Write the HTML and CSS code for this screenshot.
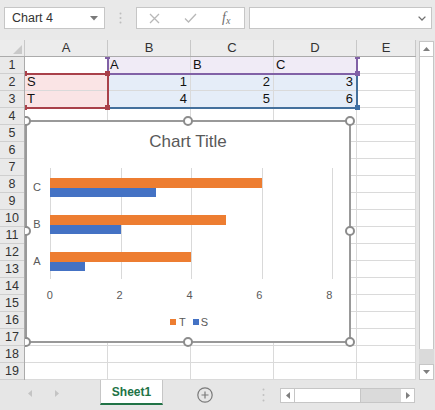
FILE: index.html
```html
<!DOCTYPE html>
<html>
<head>
<meta charset="utf-8">
<title>Chart 4</title>
<link rel="stylesheet" href="styles.css">
</head>
<body>
<div class="app">
  <div class="toolbar">
    <div class="namebox">
      <span>Chart 4</span>
      <svg width="8" height="5" viewBox="0 0 8 5"><path d="M0 0H8L4 4.5Z" fill="#7a7a7a"/></svg>
    </div>
    <div class="grip">
      <svg width="3" height="12" viewBox="0 0 3 12"><circle cx="1.5" cy="1.5" r="1" fill="#bdbdbd"/><circle cx="1.5" cy="6" r="1" fill="#bdbdbd"/><circle cx="1.5" cy="10.5" r="1" fill="#bdbdbd"/></svg>
    </div>
    <div class="fxbox">
      <div class="slot"><svg width="11" height="11" viewBox="0 0 11 11"><path d="M1 1L10 10M10 1L1 10" stroke="#b8b8b8" stroke-width="1.3"/></svg></div>
      <div class="slot"><svg width="13" height="10" viewBox="0 0 13 10"><path d="M1 5.5L4.5 9L12 1" stroke="#b8b8b8" stroke-width="1.3" fill="none"/></svg></div>
      <div class="slot"><span class="fx">f<span class="fxs">x</span></span></div>
    </div>
    <div class="formula">
      <svg width="8" height="5" viewBox="0 0 8 5"><path d="M0.6 0.6L4 4L7.4 0.6" stroke="#707070" stroke-width="1.3" fill="none"/></svg>
    </div>
  </div>

  <div class="main">
    <div class="sheet">
      <div class="colheads">
        <div class="corner"><svg width="9" height="9" viewBox="0 0 9 9"><path d="M9 0V9H0Z" fill="#c9c9c9"/></svg></div>
        <div class="ch">A</div>
        <div class="ch">B</div>
        <div class="ch">C</div>
        <div class="ch">D</div>
        <div class="ch last">E</div>
      </div>
      <div class="body">
        <div class="rowheads">
          <div class="rh">1</div><div class="rh">2</div><div class="rh">3</div><div class="rh">4</div>
          <div class="rh">5</div><div class="rh">6</div><div class="rh">7</div><div class="rh">8</div>
          <div class="rh">9</div><div class="rh">10</div><div class="rh">11</div><div class="rh">12</div>
          <div class="rh">13</div><div class="rh">14</div><div class="rh">15</div><div class="rh">16</div>
          <div class="rh">17</div><div class="rh">18</div><div class="rh">19</div>
        </div>
        <div class="cells">
          <div class="c"></div><div class="c lav">A</div><div class="c lav">B</div><div class="c lav">C</div><div class="c"></div>
          <div class="c pink">S</div><div class="c blu n">1</div><div class="c blu n">2</div><div class="c blu n">3</div><div class="c"></div>
          <div class="c pink">T</div><div class="c blu n">4</div><div class="c blu n">5</div><div class="c blu n">6</div><div class="c"></div>
          <div class="c"></div><div class="c"></div><div class="c"></div><div class="c"></div><div class="c"></div>
          <div class="c"></div><div class="c"></div><div class="c"></div><div class="c"></div><div class="c"></div>
          <div class="c"></div><div class="c"></div><div class="c"></div><div class="c"></div><div class="c"></div>
          <div class="c"></div><div class="c"></div><div class="c"></div><div class="c"></div><div class="c"></div>
          <div class="c"></div><div class="c"></div><div class="c"></div><div class="c"></div><div class="c"></div>
          <div class="c"></div><div class="c"></div><div class="c"></div><div class="c"></div><div class="c"></div>
          <div class="c"></div><div class="c"></div><div class="c"></div><div class="c"></div><div class="c"></div>
          <div class="c"></div><div class="c"></div><div class="c"></div><div class="c"></div><div class="c"></div>
          <div class="c"></div><div class="c"></div><div class="c"></div><div class="c"></div><div class="c"></div>
          <div class="c"></div><div class="c"></div><div class="c"></div><div class="c"></div><div class="c"></div>
          <div class="c"></div><div class="c"></div><div class="c"></div><div class="c"></div><div class="c"></div>
          <div class="c"></div><div class="c"></div><div class="c"></div><div class="c"></div><div class="c"></div>
          <div class="c"></div><div class="c"></div><div class="c"></div><div class="c"></div><div class="c"></div>
          <div class="c"></div><div class="c"></div><div class="c"></div><div class="c"></div><div class="c"></div>
          <div class="c"></div><div class="c"></div><div class="c"></div><div class="c"></div><div class="c"></div>
          <div class="c"></div><div class="c"></div><div class="c"></div><div class="c"></div><div class="c"></div>

          <div class="frame f-blue"></div>
          <div class="frame f-purple"></div>
          <div class="frame f-red"></div>
          <div class="sq sq-blue sq-b1"></div>
          <div class="sq sq-purple sq-p1"></div>
          <div class="sq sq-purple sq-p2"></div>
          <div class="sq sq-purple sq-p3"></div>
          <div class="sq sq-red sq-r1"></div>
          <div class="sq sq-red sq-r2"></div>
          <div class="sq sq-red sq-r3"></div>
          <div class="sq sq-red sq-r4"></div>

          <div class="chart">
            <div class="ctitle">Chart Title</div>
            <div class="plotrow">
              <div class="cats">
                <div class="cat">C</div>
                <div class="cat">B</div>
                <div class="cat">A</div>
              </div>
              <div class="plot">
                <div class="gl">
                  <div class="g g71"></div><div class="g g70"></div><div class="g g71"></div><div class="g g70"></div><div class="g g1"></div>
                </div>
                <div class="bars">
                  <div class="band">
                    <div class="bar t" style="width:75%"></div>
                    <div class="bar s" style="width:37.5%"></div>
                  </div>
                  <div class="band">
                    <div class="bar t" style="width:62.5%"></div>
                    <div class="bar s" style="width:25%"></div>
                  </div>
                  <div class="band">
                    <div class="bar t" style="width:50%"></div>
                    <div class="bar s" style="width:12.5%"></div>
                  </div>
                </div>
              </div>
            </div>
            <div class="axis">
              <div class="tick">0</div><div class="tick">2</div><div class="tick">4</div><div class="tick">6</div><div class="tick">8</div>
            </div>
            <div class="legend">
              <span class="key k-t"></span><span class="lt">T</span>
              <span class="key k-s"></span><span class="lt">S</span>
            </div>
            <div class="hd hd-tl"></div><div class="hd hd-tm"></div><div class="hd hd-tr"></div>
            <div class="hd hd-ml"></div><div class="hd hd-mr"></div>
            <div class="hd hd-bl"></div><div class="hd hd-bm"></div><div class="hd hd-br"></div>
          </div>
        </div>
      </div>
    </div>
    <div class="vscroll">
      <div class="vbtn"><svg width="7" height="4" viewBox="0 0 7 4"><path d="M0 4H7L3.5 0Z" fill="#7f7f7f"/></svg></div>
      <div class="vthumb"></div>
      <div class="vtrack"></div>
      <div class="vbtn"><svg width="7" height="4" viewBox="0 0 7 4"><path d="M0 0H7L3.5 4Z" fill="#7f7f7f"/></svg></div>
    </div>
  </div>

  <div class="tabbar">
    <div class="nav">
      <svg width="4" height="7" viewBox="0 0 4 7"><path d="M4 0V7L0 3.5Z" fill="#c4c4c4"/></svg>
      <svg class="nav-r" width="4" height="7" viewBox="0 0 4 7"><path d="M0 0V7L4 3.5Z" fill="#c4c4c4"/></svg>
    </div>
    <div class="tab">Sheet1</div>
    <div class="plus"><svg width="16" height="16" viewBox="0 0 16 16"><circle cx="8" cy="8" r="7.2" fill="none" stroke="#7a7a7a" stroke-width="1.2"/><path d="M8 4.5V11.5M4.5 8H11.5" stroke="#7a7a7a" stroke-width="1.2"/></svg></div>
    <div class="tdots"><svg width="3" height="14" viewBox="0 0 3 14"><circle cx="1.5" cy="1.5" r="1" fill="#c0c0c0"/><circle cx="1.5" cy="7" r="1" fill="#c0c0c0"/><circle cx="1.5" cy="12.5" r="1" fill="#c0c0c0"/></svg></div>
    <div class="hscroll">
      <div class="hbtn"><svg width="4" height="7" viewBox="0 0 4 7"><path d="M4 0V7L0 3.5Z" fill="#7f7f7f"/></svg></div>
      <div class="hthumb"></div>
      <div class="htrack"></div>
      <div class="hbtn"><svg width="4" height="7" viewBox="0 0 4 7"><path d="M0 0V7L4 3.5Z" fill="#7f7f7f"/></svg></div>
    </div>
  </div>
</div>
</body>
</html>
```
FILE: styles.css
```css
* { box-sizing: border-box; }
html, body { margin: 0; padding: 0; }
body {
  width: 435px; height: 410px; overflow: hidden;
  background: #e6e6e6;
  font-family: "Liberation Sans", Arial, sans-serif;
  color: #222;
}
.app { display: flex; flex-direction: column; width: 435px; height: 410px; }

/* toolbar */
.toolbar {
  height: 40px; flex: none; display: flex; align-items: flex-start;
  padding: 7px 3px 0 4px; background: #e9e9e9;
}
.namebox {
  width: 101px; height: 22px; background: #fff; border: 1px solid #c6c6c6;
  display: flex; align-items: center; justify-content: space-between;
  padding: 0 6px 0 7px; font-size: 12.5px; color: #333;
}
.grip { width: 31px; height: 22px; display: flex; align-items: center; justify-content: center; }
.fxbox { width: 109px; height: 22px; background: #fff; border: 1px solid #c6c6c6; display: flex; }
.slot { flex: 1; display: flex; align-items: center; justify-content: center; }
.fx { font-family: "Liberation Serif", serif; font-style: italic; font-size: 14px; color: #6e6e6e; line-height: 14px; }
.fxs { font-size: 10px; position: relative; top: 2px; }
.formula {
  flex: 1; margin-left: 4px; height: 22px; background: #fff; border: 1px solid #c6c6c6;
  display: flex; align-items: center; justify-content: flex-end; padding-right: 5px;
}

/* main */
.main { display: flex; height: 340px; flex: none; }
.sheet { width: 416px; display: flex; flex-direction: column; background: #fff; }
.colheads { display: flex; height: 17px; flex: none; background: #ececec; border-bottom: 1px solid #ababab; }
.corner {
  width: 25px; border-right: 1px solid #c8c8c8;
  display: flex; align-items: flex-end; justify-content: flex-end; padding: 0 2px 2px 0;
}
.ch { width: 83px; border-right: 1px solid #c8c8c8; text-align: center; font-size: 13px; line-height: 16px; color: #333; }
.ch.last { width: 59px; }

.body { display: flex; flex: 1; }
.rowheads { width: 25px; flex: none; background: #e9e9e9; border-right: 1px solid #ababab; }
.rh { height: 17px; border-bottom: 1px solid #cfcfcf; text-align: center; font-size: 12.5px; line-height: 16px; color: #333; }

.cells {
  position: relative; overflow: hidden; width: 391px;
  display: grid; grid-template-columns: 83px 83px 83px 83px 59px; grid-auto-rows: 17px;
}
.c {
  border-right: 1px solid #dadada; border-bottom: 1px solid #dadada;
  font-size: 13px; line-height: 16px; padding: 0 3px 0 2px; white-space: nowrap; overflow: hidden; color: #111;
}
.c.n { text-align: right; }
.c.pink { background: #fae4e5; }
.c.lav { background: #f0ebf6; }
.c.blu { background: #e5edf8; }

/* range frames (overlays) */
.frame { position: absolute; border: 2px solid; }
.f-red { left: -2px; top: 16px; width: 86px; height: 36px; border-color: #a9414a; }
.f-purple { left: 82px; top: -2px; width: 251px; height: 20px; border-color: #8161a6; }
.f-blue { left: 82px; top: 16px; width: 251px; height: 36px; border-color: #44709c; }
.sq { position: absolute; width: 5px; height: 5px; }
.sq-red { background: #a9414a; }
.sq-purple { background: #8161a6; }
.sq-blue { background: #3f6fa3; }
.sq-r1 { left: 80px; top: 14px; }
.sq-r2 { left: 80px; top: 48px; }
.sq-r3 { left: -3px; top: 14px; }
.sq-r4 { left: -3px; top: 48px; }
.sq-p1 { left: 80px; top: -3px; }
.sq-p2 { left: 330px; top: -3px; }
.sq-p3 { left: 330px; top: 14px; }
.sq-b1 { left: 330px; top: 48px; }

/* chart (floating object) */
.chart {
  position: absolute; left: 0; top: 63px; width: 326px; height: 223px;
  border: 2px solid #999; background: #fff; color: #595959;
}
.ctitle { margin-top: 10px; height: 20px; line-height: 20px; font-size: 17px; text-align: center; }
.plotrow { margin-top: 16px; display: flex; height: 111px; }
.cats { width: 23px; display: flex; flex-direction: column; }
.cat { height: 37px; line-height: 37px; padding: 1px 3px 0 0; text-align: center; font-size: 11px; }
.plot { width: 283px; display: grid; }
.gl, .bars { grid-area: 1 / 1; }
.gl { display: flex; }
.g { border-left: 1px solid #d9d9d9; }
.g71 { width: 71px; }
.g70 { width: 70px; }
.g1 { width: 1px; }
.bars { width: 282px; display: flex; flex-direction: column; }
.band { height: 37px; padding-top: 10px; }
.bar.t { height: 10px; background: #ed7d31; }
.bar.s { height: 9px; background: #4472c4; }
.axis { margin-top: 9px; height: 14px; display: flex; gap: 30.5px; padding-left: 3px; }
.tick { width: 40px; text-align: center; font-size: 11px; line-height: 14px; }
.legend { margin-top: 13px; height: 14px; display: flex; align-items: center; justify-content: center; font-size: 11px; padding-left: 2px; }
.key { width: 6px; height: 6px; margin-right: 3px; }
.k-t { background: #ed7d31; }
.k-s { background: #4472c4; margin-left: 7px; margin-right: 2px; }
.lt { line-height: 14px; }

.hd { position: absolute; width: 10px; height: 10px; border: 2px solid #8c8c8c; border-radius: 50%; background: #fff; }
.hd-tl { left: -6px; top: -6px; }
.hd-tm { left: 156px; top: -6px; }
.hd-tr { left: 318px; top: -6px; }
.hd-ml { left: -6px; top: 104px; }
.hd-mr { left: 318px; top: 104px; }
.hd-bl { left: -6px; top: 215px; }
.hd-bm { left: 156px; top: 215px; }
.hd-br { left: 318px; top: 215px; }

/* vertical scrollbar */
.vscroll { width: 19px; display: flex; flex-direction: column; padding: 1px 1px 0 3px; background: #e6e6e6; }
.vbtn { height: 16px; flex: none; background: #fff; border: 1px solid #c6c6c6; display: flex; align-items: center; justify-content: center; }
.vthumb { height: 292px; flex: none; background: #fff; border-left: 1px solid #c6c6c6; border-right: 1px solid #c6c6c6; }
.vtrack { flex: 1; background: #dadada; }

/* sheet tabs */
.tabbar { height: 30px; flex: none; display: flex; align-items: flex-start; background: #e6e6e6; }
.nav { width: 100px; height: 26px; display: flex; align-items: center; padding-left: 28px; }
.nav-r { margin-left: 23px; }
.tab {
  width: 63px; height: 25px; background: #fff;
  border-left: 1px solid #c6c6c6; border-right: 1px solid #c6c6c6; border-bottom: 2px solid #217346;
  padding-top: 3px; line-height: 19px; text-align: center;
  font-size: 12px; font-weight: bold; color: #217346;
}
.plus { margin: 7px 0 0 34px; width: 16px; height: 16px; display: flex; }
.tdots { margin: 8px 0 0 49px; width: 3px; height: 14px; display: flex; }
.hscroll {
  margin: 8px 0 0 15px; width: 135px; height: 15px; display: flex;
  border: 1px solid #c6c6c6; background: #dadada;
}
.hbtn { width: 13px; background: #fff; display: flex; align-items: center; justify-content: center; }
.hthumb { width: 67px; background: #fff; border-left: 1px solid #c6c6c6; border-right: 1px solid #c6c6c6; }
.htrack { flex: 1; }
```
